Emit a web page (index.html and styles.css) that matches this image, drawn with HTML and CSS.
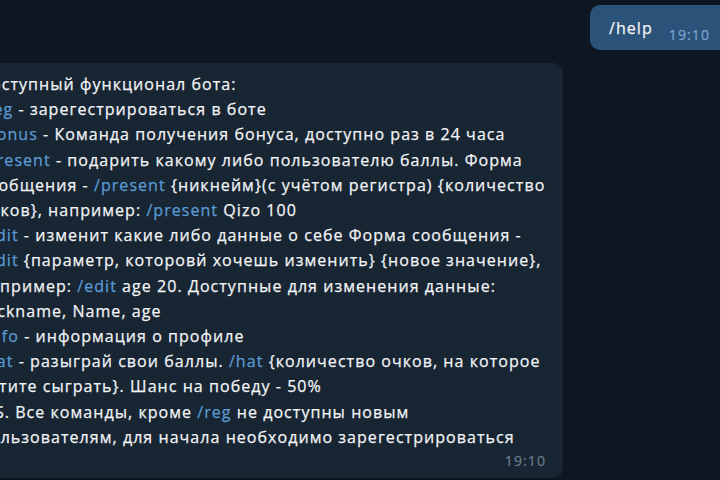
FILE: index.html
```html
<!DOCTYPE html>
<html lang="ru">
<head>
<meta charset="utf-8">
<link rel="stylesheet" href="styles.css">
</head>
<body>
<div class="chat">
  <div class="row out">
    <div class="bubble bubble-out">
      <span class="cmd-out">/help</span>
      <span class="time time-out">19:10</span>
    </div>
  </div>
  <div class="row in">
    <div class="bubble bubble-in">
      <div class="line">Доступный функционал бота:</div>
      <div class="line"><span class="cmd">/reg</span> - зарегестрироваться в боте</div>
      <div class="line"><span class="cmd">/bonus</span> - Команда получения бонуса, доступно раз в 24 часа</div>
      <div class="line"><span class="cmd">/present</span> - подарить какому либо пользователю баллы. Форма</div>
      <div class="line">сообщения - <span class="cmd">/present</span> {никнейм}(с учётом регистра) {количество</div>
      <div class="line">очков}, например: <span class="cmd">/present</span> Qizo 100</div>
      <div class="line"><span class="cmd">/edit</span> - изменит какие либо данные о себе Форма сообщения -</div>
      <div class="line"><span class="cmd">/edit</span> {параметр, которовй хочешь изменить} {новое значение},</div>
      <div class="line">например: <span class="cmd">/edit</span> age 20. Доступные для изменения данные:</div>
      <div class="line">Nickname, Name, age</div>
      <div class="line"><span class="cmd">/info</span> - информация о профиле</div>
      <div class="line"><span class="cmd">/hat</span> - разыграй свои баллы. <span class="cmd">/hat</span> {количество очков, на которое</div>
      <div class="line">хотите сыграть}. Шанс на победу - 50%</div>
      <div class="line">P.S. Все команды, кроме <span class="cmd">/reg</span> не доступны новым</div>
      <div class="line">пользователям, для начала необходимо зарегестрироваться</div>
      <div class="time time-in">19:10</div>
    </div>
  </div>
</div>
</body>
</html>
```

FILE: styles.css
```css
html, body {
  margin: 0;
  padding: 0;
  width: 720px;
  height: 480px;
  overflow: hidden;
  background: #0e1621;
}

.chat {
  display: flex;
  flex-direction: column;
  gap: 13px;
  padding-top: 5px;
  font-family: "Open Sans", "Noto Sans", sans-serif;
  color: #f2f4f6;
}

.row {
  display: flex;
}

.row.out {
  justify-content: flex-end;
}

.bubble {
  box-sizing: border-box;
}

.bubble-out {
  background: #2b5278;
  border-radius: 10px;
  margin-right: -14px;
  height: 45px;
  padding: 3px 24px 0 19px;
  display: flex;
  align-items: center;
  gap: 16px;
}

.cmd-out {
  font-size: 16px;
  letter-spacing: 1.05px;
  -webkit-text-stroke: 0.25px currentColor;
  color: #f2f4f6;
  padding-bottom: 3px;
}

.time {
  font-size: 14px;
  letter-spacing: 1.1px;
  -webkit-text-stroke: 0.2px currentColor;
}

.time-out {
  color: #7da8d3;
  padding-top: 10px;
}

.bubble-in {
  background: #182533;
  border-radius: 10px;
  margin-left: -40px;
  width: 603px;
  padding: 9px 0 6px 19px;
}

.line {
  font-size: 16px;
  line-height: 25.2px;
  letter-spacing: 1.05px;
  -webkit-text-stroke: 0.25px currentColor;
  white-space: nowrap;
}

.cmd {
  color: #5b9bd5;
}

.time-in {
  color: #6d7f8f;
  text-align: right;
  padding-right: 17px;
  line-height: 22px;
}
```
